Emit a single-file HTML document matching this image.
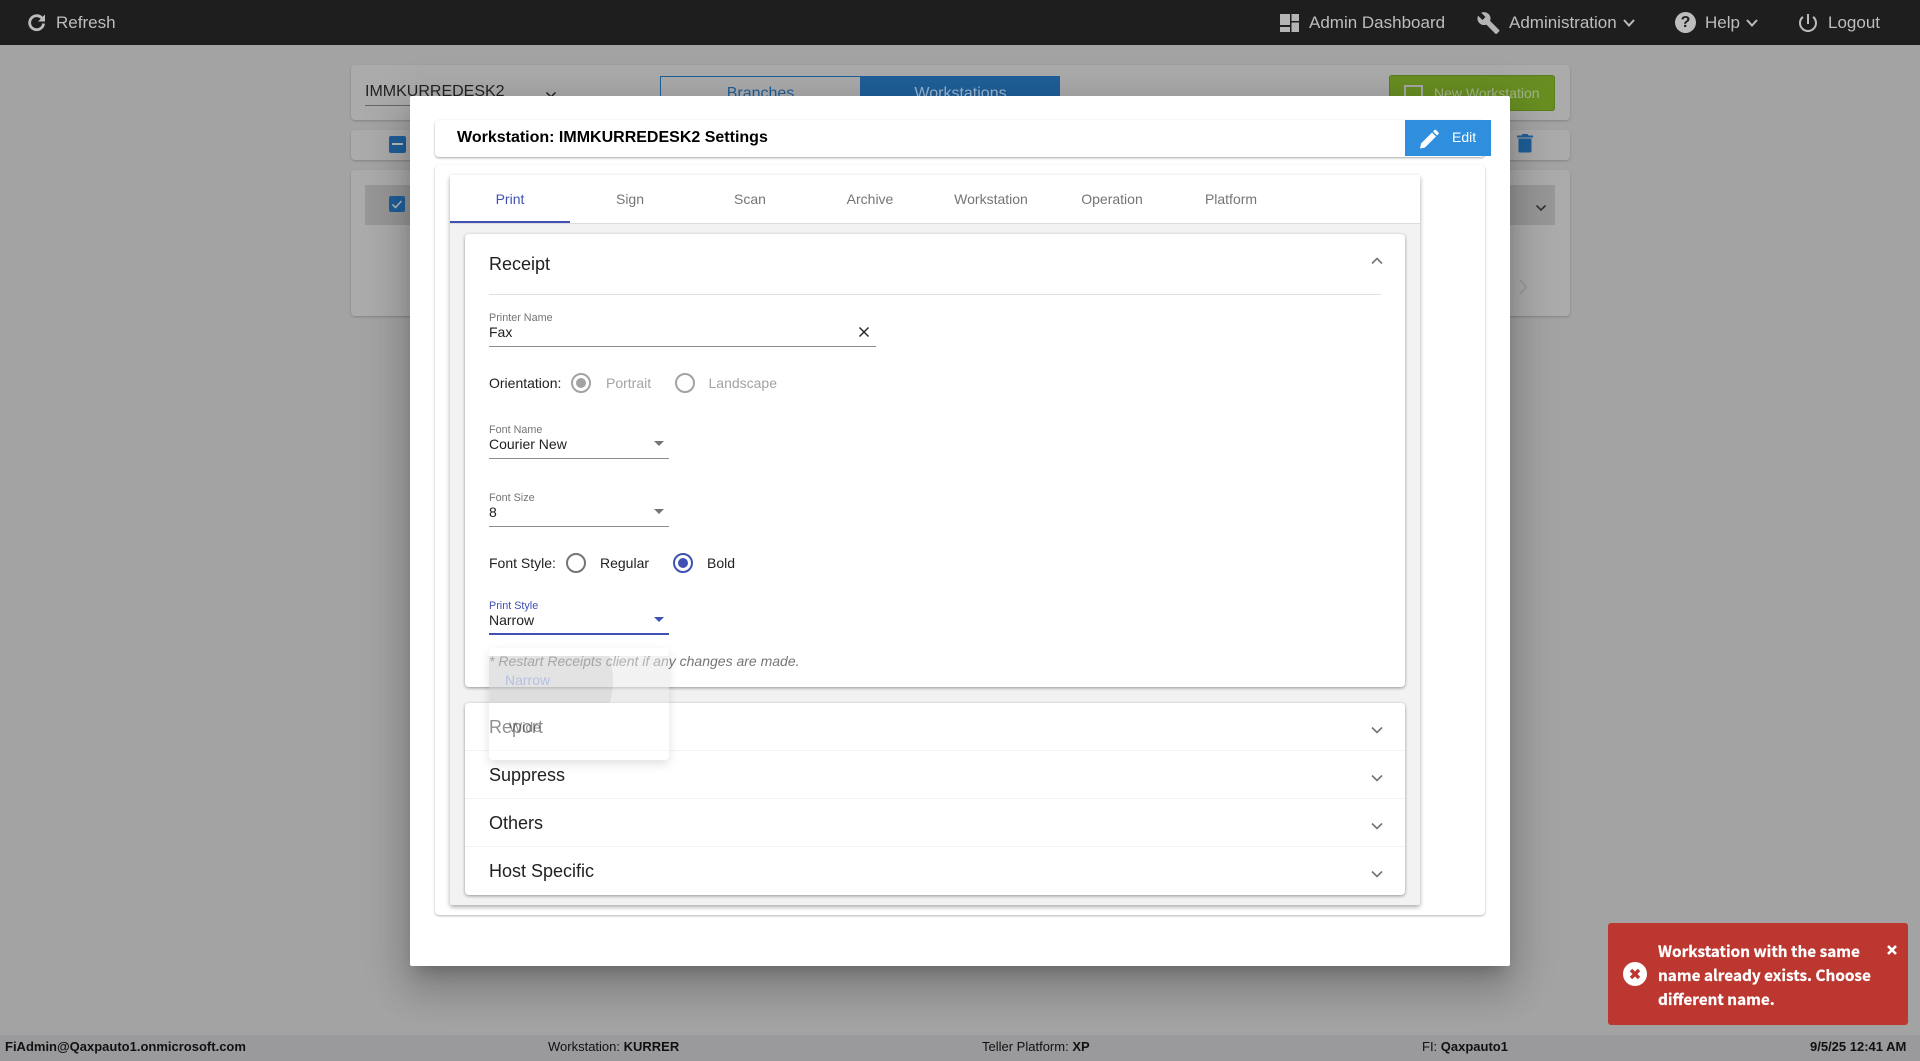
<!DOCTYPE html>
<html><head><meta charset="utf-8"><title>Workstation Settings</title>
<style>
html,body{margin:0;padding:0;width:1920px;height:1061px;overflow:hidden;background:#a3a3a3;font-family:"Liberation Sans",Arial,sans-serif;}
.a{position:absolute;}
.t{position:absolute;white-space:nowrap;}
svg{position:absolute;display:block;}
.bg{position:absolute;background:#ababab;border-radius:4px;box-shadow:0 1px 2px rgba(0,0,0,.2);}
.nav{color:#bdbdbd;font-size:17px;line-height:20px;top:13px;}
.tab{position:absolute;top:175px;width:120px;height:48px;line-height:48px;text-align:center;font-size:14px;color:#757575;}
.head{font-size:18px;color:#212121;line-height:24px;left:489px;}
.lab{font-size:10.8px;color:#757575;line-height:12px;left:489px;}
.val{font-size:14px;color:#212121;line-height:16px;left:489px;}
.ul{position:absolute;left:489px;width:180px;height:1px;background:#8c8c8c;}
.arrow{position:absolute;left:654px;width:0;height:0;border-left:5px solid transparent;border-right:5px solid transparent;border-top:5px solid #757575;}
.radio{position:absolute;width:16px;height:16px;border:2px solid #757575;border-radius:50%;}
.foot{top:1039px;font-size:13px;line-height:16px;color:#111;}
</style></head>
<body>
<!-- background page -->
<div class="bg" style="left:351px;top:65px;width:1219px;height:55px;"></div>
<div class="bg" style="left:351px;top:130px;width:1219px;height:30px;"></div>
<div class="bg" style="left:351px;top:170px;width:1219px;height:146px;"></div>
<div class="t" style="left:365px;top:82px;font-size:16px;line-height:20px;color:#222;">IMMKURREDESK2</div>
<div class="a" style="left:365px;top:105px;width:180px;height:1px;background:#666;"></div>
<svg style="left:545px;top:90px" width="12" height="10" viewBox="0 0 12 10"><path d="M1.5 2.5L6 7l4.5-4.5" fill="none" stroke="#222" stroke-width="1.5"/></svg>
<div class="a" style="left:660px;top:76px;width:201px;height:30px;border:1px solid #1f5f99;border-bottom:0;box-sizing:border-box;"></div>
<div class="t" style="left:660px;width:201px;top:85px;text-align:center;font-size:16px;line-height:18px;color:#1f5f99;">Branches</div>
<div class="a" style="left:861px;top:76px;width:199px;height:30px;background:#1f5f99;"></div>
<div class="t" style="left:861px;width:199px;top:85px;text-align:center;font-size:16px;line-height:18px;color:#9db8d0;">Workstations</div>
<div class="a" style="left:1389px;top:75px;width:166px;height:36px;background:#688e22;border-radius:3px;box-shadow:inset 0 0 0 1px #5b7f1b;"></div>
<div class="a" style="left:1404px;top:85px;width:19px;height:19px;border:2px solid #a8a8a8;box-sizing:border-box;"></div>
<div class="t" style="left:1434px;top:84px;font-size:14px;line-height:18px;color:#a5b58a;">New Workstation</div>
<div class="a" style="left:389px;top:136px;width:17px;height:17px;background:#1f5f99;border-radius:2px;"></div>
<div class="a" style="left:392px;top:143px;width:11px;height:2px;background:#bcbcbc;"></div>
<svg style="left:1516px;top:133px" width="18" height="20" viewBox="0 0 18 20"><path fill="#1f5f99" d="M1 2.5h4.5L6.5 1h5l1 1.500H17v2H1zM2.500 5.500h13V18a1.500 1.500 0 0 1-1.500 1.500H4A1.500 1.500 0 0 1 2.500 18z"/></svg>
<div class="a" style="left:365px;top:185px;width:1190px;height:40px;background:#979797;"></div>
<div class="a" style="left:389px;top:196px;width:16px;height:16px;background:#1f5f99;border-radius:2px;"></div>
<svg style="left:389px;top:196px" width="16" height="16" viewBox="0 0 16 16"><path d="M3.500 8.500l3 3 6-6.500" fill="none" stroke="#bcbcbc" stroke-width="1.5"/></svg>
<svg style="left:1535px;top:203px" width="12" height="10" viewBox="0 0 12 10"><path d="M1.500 2.500L6 7l4.500-4.500" fill="none" stroke="#333" stroke-width="1.6"/></svg>
<svg style="left:1518px;top:278px" width="10" height="18" viewBox="0 0 10 18"><path d="M2 2l6 7-6 7" fill="none" stroke="#989898" stroke-width="1.5"/></svg>

<!-- navbar -->
<div class="a" style="left:0;top:0;width:1920px;height:45px;background:#1e1e1e;"></div>
<svg style="left:28px;top:14px" width="18" height="18" viewBox="0 0 18 18"><path d="M14 4.200A7 7 0 1 0 15.600 9.500" fill="none" stroke="#bdbdbd" stroke-width="2.800"/><path fill="#bdbdbd" d="M17 0.500V7.500H10z"/></svg>
<div class="t nav" style="left:56px;">Refresh</div>
<svg style="left:1280px;top:14px" width="19" height="18" viewBox="0 0 19 18"><path fill="#b4b4b4" d="M0 0h10v11H0zM11.500 0H19v7h-7.500zM0 13h10v5H0zM11.500 8.500H19V18h-7.500z"/></svg>
<div class="t nav" style="left:1309px;">Admin Dashboard</div>
<svg style="left:1476px;top:11px" width="25" height="24" viewBox="0 0 24 24"><path fill="#b4b4b4" d="M22.700 19l-9.100-9.100c.9-2.300.4-5-1.500-6.900-2-2-5-2.400-7.400-1.300L9 6 6 9 1.600 4.700C.4 7.100.9 10.100 2.900 12.100c1.900 1.900 4.600 2.400 6.900 1.500l9.100 9.100c.4.4 1 .4 1.400 0l2.300-2.300c.5-.4.5-1.100.1-1.400z"/></svg>
<div class="t nav" style="left:1509px;">Administration</div>
<svg style="left:1622px;top:17px" width="14" height="12" viewBox="0 0 14 12"><path d="M2 3l5 5.500L12 3" fill="none" stroke="#bdbdbd" stroke-width="2"/></svg>
<div class="a" style="left:1675px;top:12px;width:21px;height:21px;border-radius:50%;background:#bdbdbd;"></div>
<div class="t" style="left:1675px;width:21px;top:13px;text-align:center;font-size:16px;font-weight:bold;line-height:20px;color:#1e1e1e;">?</div>
<div class="t nav" style="left:1705px;">Help</div>
<svg style="left:1745px;top:17px" width="14" height="12" viewBox="0 0 14 12"><path d="M2 3l5 5.500L12 3" fill="none" stroke="#bdbdbd" stroke-width="2"/></svg>
<svg style="left:1796px;top:11px" width="24" height="24" viewBox="0 0 24 24"><path fill="#bdbdbd" d="M13 3h-2v10h2V3zm4.830 2.170l-1.420 1.420C17.990 7.860 19 9.810 19 12c0 3.870-3.130 7-7 7s-7-3.130-7-7c0-2.190 1.010-4.140 2.580-5.420L6.170 5.170C4.230 6.820 3 9.260 3 12c0 4.970 4.030 9 9 9s9-4.030 9-9c0-2.740-1.230-5.180-3.170-6.830z"/></svg>
<div class="t nav" style="left:1828px;">Logout</div>

<!-- footer -->
<div class="a" style="left:0;top:1035px;width:1920px;height:26px;background:#9a9a9c;"></div>
<div class="t foot" style="left:5px;font-weight:bold;">FiAdmin@Qaxpauto1.onmicrosoft.com</div>
<div class="t foot" style="left:548px;">Workstation: <b>KURRER</b></div>
<div class="t foot" style="left:982px;">Teller Platform: <b>XP</b></div>
<div class="t foot" style="left:1422px;">FI: <b>Qaxpauto1</b></div>
<div class="t foot" style="left:1810px;font-weight:bold;">9/5/25 12:41 AM</div>

<!-- modal -->
<div class="a" style="left:410px;top:96px;width:1100px;height:870px;background:#fff;border-radius:2px;box-shadow:0 11px 15px -7px rgba(0,0,0,.2),0 24px 38px 3px rgba(0,0,0,.14),0 9px 46px 8px rgba(0,0,0,.12);"></div>
<div class="a" style="left:435px;top:120px;width:1050px;height:37px;background:#fff;border-radius:4px;box-shadow:0 1px 2px rgba(0,0,0,.35);"></div>
<div class="t" style="left:457px;top:128px;font-size:16px;font-weight:bold;line-height:20px;color:#000;">Workstation: IMMKURREDESK2 Settings</div>
<div class="a" style="left:1405px;top:120px;width:86px;height:36px;background:#2f8fde;"></div>
<svg style="left:1419px;top:129px" width="20" height="21" viewBox="0 0 20 20"><path fill="#fff" d="M1 19l1-5L13 3l4 4L6 18zM14 2l1.500-1.500a1 1 0 0 1 1.500 0l2.500 2.500a1 1 0 0 1 0 1.500L18 6z"/></svg>
<div class="t" style="left:1452px;top:128px;font-size:14px;line-height:18px;color:#fff;">Edit</div>
<div class="a" style="left:435px;top:165px;width:1050px;height:750px;background:#fff;border-radius:4px;box-shadow:0 1px 2px rgba(0,0,0,.3);"></div>

<!-- tab card -->
<div class="a" style="left:450px;top:175px;width:970px;height:730px;background:#f2f2f2;border-radius:2px;box-shadow:0 2px 5px rgba(0,0,0,.35);"></div>
<div class="a" style="left:450px;top:175px;width:970px;height:48px;background:#fff;border-bottom:1px solid #ddd;"></div>
<div class="a" style="left:450px;top:221px;width:120px;height:2px;background:#3f51b5;"></div>
<div class="tab" style="left:450px;color:#3f51b5;">Print</div>
<div class="tab" style="left:570px;">Sign</div>
<div class="tab" style="left:690px;">Scan</div>
<div class="tab" style="left:810px;">Archive</div>
<div class="tab" style="left:931px;">Workstation</div>
<div class="tab" style="left:1052px;">Operation</div>
<div class="tab" style="left:1171px;">Platform</div>

<!-- Receipt -->
<div class="a" style="left:465px;top:234px;width:940px;height:453px;background:#fff;border-radius:4px;box-shadow:0 1px 3px rgba(0,0,0,.4);"></div>
<div class="t head" style="top:252px;">Receipt</div>
<svg style="left:1370px;top:255px" width="14" height="12" viewBox="0 0 14 12"><path d="M2 8.500L7 3.500l5 5" fill="none" stroke="#757575" stroke-width="1.600"/></svg>
<div class="a" style="left:489px;top:294px;width:892px;height:1px;background:#e0e0e0;"></div>
<div class="t lab" style="top:311.500px;">Printer Name</div>
<div class="t val" style="top:324px;">Fax</div>
<svg style="left:858px;top:326px" width="12" height="12" viewBox="0 0 12 12"><path d="M1.500 1.500l9 9M10.500 1.500l-9 9" stroke="#222" stroke-width="1.400" fill="none"/></svg>
<div class="ul" style="width:387px;top:346px;"></div>

<div class="t val" style="top:375px;">Orientation:</div>
<div class="radio" style="left:571px;top:373px;border-color:#a3a3a3;"></div>
<div class="a" style="left:576px;top:378px;width:10px;height:10px;border-radius:50%;background:#a3a3a3;"></div>
<div class="t val" style="left:606px;top:375px;color:#a3a3a3;">Portrait</div>
<div class="radio" style="left:675px;top:373px;border-color:#a3a3a3;"></div>
<div class="t val" style="left:708.500px;top:375px;color:#a3a3a3;">Landscape</div>

<div class="t lab" style="top:423.500px;">Font Name</div>
<div class="t val" style="top:436px;">Courier New</div>
<div class="arrow" style="top:441px;"></div>
<div class="ul" style="top:458px;"></div>

<div class="t lab" style="top:491.500px;">Font Size</div>
<div class="t val" style="top:504px;">8</div>
<div class="arrow" style="top:509px;"></div>
<div class="ul" style="top:526px;"></div>

<div class="t val" style="top:555px;">Font Style:</div>
<div class="radio" style="left:566px;top:553px;"></div>
<div class="t val" style="left:600px;top:555px;">Regular</div>
<div class="radio" style="left:673px;top:553px;border-color:#3f51b5;"></div>
<div class="a" style="left:678px;top:558px;width:10px;height:10px;border-radius:50%;background:#3f51b5;"></div>
<div class="t val" style="left:707px;top:555px;">Bold</div>

<div class="t lab" style="top:599.500px;color:#3f51b5;">Print Style</div>
<div class="t val" style="top:612px;">Narrow</div>
<div class="arrow" style="top:617px;border-top-color:#3f51b5;"></div>
<div class="ul" style="top:633px;height:2px;background:#3f51b5;"></div>
<div class="t" style="left:489px;top:653px;font-size:14px;line-height:16px;font-style:italic;color:#757575;">* Restart Receipts client if any changes are made.</div>

<!-- Collapsed accordions -->
<div class="a" style="left:465px;top:703px;width:940px;height:192px;background:#fff;border-radius:4px;box-shadow:0 1px 3px rgba(0,0,0,.4);"></div>
<div class="a" style="left:465px;top:750px;width:940px;height:1px;background:#f3f3f3;"></div>
<div class="a" style="left:465px;top:798px;width:940px;height:1px;background:#f3f3f3;"></div>
<div class="a" style="left:465px;top:846px;width:940px;height:1px;background:#f3f3f3;"></div>
<div class="t head" style="top:715px;">Report</div>
<div class="t head" style="top:763px;">Suppress</div>
<div class="t head" style="top:811px;">Others</div>
<div class="t head" style="top:859px;">Host Specific</div>
<svg style="left:1370px;top:724px" width="14" height="12" viewBox="0 0 14 12"><path d="M2 3.500L7 8.500l5-5" fill="none" stroke="#757575" stroke-width="1.600"/></svg>
<svg style="left:1370px;top:772px" width="14" height="12" viewBox="0 0 14 12"><path d="M2 3.500L7 8.500l5-5" fill="none" stroke="#757575" stroke-width="1.600"/></svg>
<svg style="left:1370px;top:820px" width="14" height="12" viewBox="0 0 14 12"><path d="M2 3.500L7 8.500l5-5" fill="none" stroke="#757575" stroke-width="1.600"/></svg>
<svg style="left:1370px;top:868px" width="14" height="12" viewBox="0 0 14 12"><path d="M2 3.500L7 8.500l5-5" fill="none" stroke="#757575" stroke-width="1.600"/></svg>

<!-- Fading menu -->
<div class="a" style="left:489px;top:648px;width:180px;height:112px;background:rgba(255,255,255,.5);border-radius:4px;box-shadow:0 4px 10px rgba(0,0,0,.12);overflow:hidden;">
  <div class="a" style="left:0;top:8px;width:180px;height:47px;background:rgba(0,0,0,.05);overflow:hidden;">
    <div class="a" style="left:-46px;top:-61px;width:170px;height:170px;border-radius:50%;background:rgba(0,0,0,.06);"></div>
  </div>
  <div class="t" style="left:16px;top:24px;font-size:14px;line-height:16px;color:#b7bfe4;">Narrow</div>
  <div class="t" style="left:20px;top:71px;font-size:14px;line-height:16px;color:rgba(33,33,33,.5);">Wide</div>
</div>

<!-- toast -->
<div class="a" style="left:1608px;top:923px;width:300px;height:102px;background:#bc3730;border-radius:3px;"></div>
<div class="a" style="left:1623px;top:962px;width:24px;height:24px;border-radius:50%;background:#fff;"></div>
<svg style="left:1623px;top:962px" width="24" height="24" viewBox="0 0 24 24"><path d="M8 8l8 8M16 8l-8 8" stroke="#bc3730" stroke-width="3.400" fill="none"/></svg>
<div class="t" style="left:1658px;top:939px;font-size:15.300px;font-weight:bold;line-height:24px;color:#fff;-webkit-text-stroke:.25px #fff;font-family:'Noto Sans CJK JP','Liberation Sans',sans-serif;">Workstation with the same<br>name already exists. Choose<br>different name.</div>
<svg style="left:1886px;top:944px" width="12" height="12" viewBox="0 0 12 12"><path d="M2 2l8 8M10 2l-8 8" stroke="#fff" stroke-width="2.600" fill="none"/></svg>
</body></html>
